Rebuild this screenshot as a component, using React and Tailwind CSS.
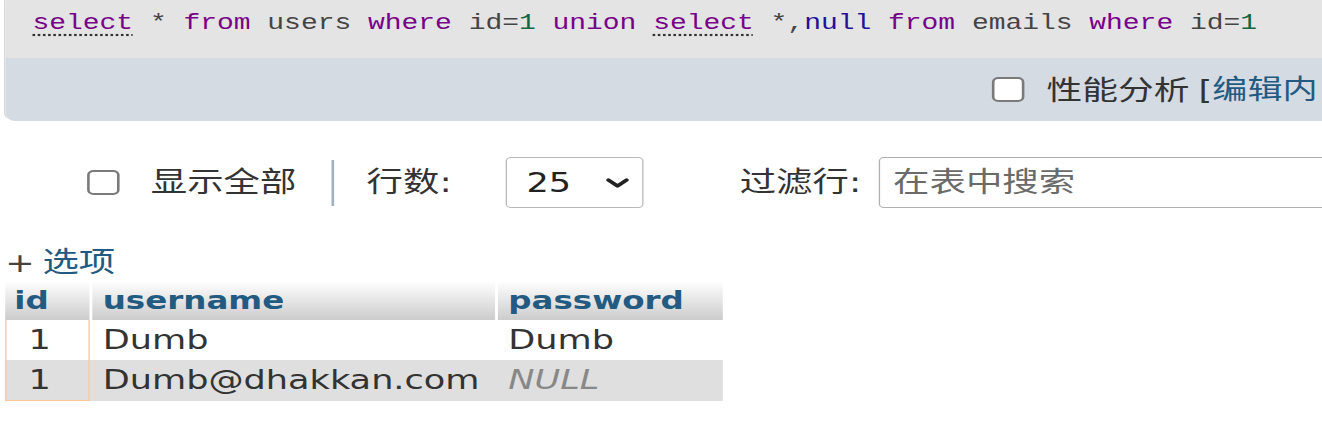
import React from "react";

const K = ({ children, u }) => (
  <span className={"text-[#770088]" + (u ? " underline decoration-dotted decoration-[#333] underline-offset-[5px]" : "")}>{children}</span>
);
const N = ({ children }) => <span className="text-[#116644]">{children}</span>;
const A = ({ children }) => <span className="text-[#221199]">{children}</span>;

const Box = () => (
  <span className="inline-block w-[25px] h-[25px] shrink-0 rounded-[5px] border-2 border-[#7a7a7a] bg-white" />
);

export default function App() {
  return (
    <div className="w-[1322px] h-[438px] overflow-hidden bg-white">
      <div
        className="w-[1100px] origin-top-left scale-x-[1.3] text-[#333]"
        style={{ fontFamily: '"DejaVu Sans", "Noto Sans CJK SC", sans-serif' }}
      >
        {/* SQL panel */}
        <div className="ml-[3px] rounded-bl-[9px] overflow-hidden border-l border-[#d8d8d8]">
          <div className="h-[58px] bg-[#e4e4e4] pl-[21px] pt-[11px]">
            <div
              className="text-[21.5px] leading-[24px] whitespace-pre text-[#444]"
              style={{ fontFamily: '"Liberation Mono", monospace' }}
            >
              <K u>select</K> * <K>from</K> users <K>where</K> id=<N>1</N> <K>union</K> <K u>select</K> *,<A>null</A> <K>from</K> emails <K>where</K> id=<N>1</N>
            </div>
          </div>
          <div className="h-[63px] bg-[#d4dbe2] flex items-center pl-[759px] whitespace-nowrap">
            <Box />
            <span className="ml-[17px] text-[27.5px] leading-[30px] text-[#333]">性能分析</span>
            <span className="ml-[7px] text-[27px] leading-[30px] text-[#333]">[</span>
            <span className="text-[27px] leading-[30px] text-[#235a81]">编辑内</span>
          </div>
        </div>

        {/* Controls row */}
        <div className="mt-[36px] h-[51px] flex items-center whitespace-nowrap text-[28px] leading-[30px]">
          <span className="ml-[67px] shrink-0 flex"><Box /></span>
          <span className="ml-[24px] w-[114px] shrink-0 text-[#333]">显示全部</span>
          <span className="ml-[25px] w-[2px] h-[46px] shrink-0 bg-[#9fb0c2]" />
          <span className="ml-[25px] w-[84px] shrink-0 text-[#333]">行数:</span>
          <div className="ml-[23px] w-[106px] h-[51px] shrink-0 rounded-[4px] border-[1.5px] border-[#b8b8b8] bg-white flex items-center pl-[15px] pr-[9px] justify-between text-[27px]">
            <span className="text-[#222]">25</span>
            <svg width="20" height="12" viewBox="0 0 20 12">
              <polyline points="3,3 10,9 17,3" fill="none" stroke="#222" strokeWidth="3.4" strokeLinecap="round" strokeLinejoin="round" />
            </svg>
          </div>
          <span className="ml-[74px] w-[94px] shrink-0 text-[#333]">过滤行:</span>
          <div className="ml-[13px] w-[400px] h-[51px] shrink-0 rounded-[4px] border-[1.5px] border-[#b0b0b0] bg-white flex items-center pl-[10px]">
            <span className="text-[#6a6a6a]">在表中搜索</span>
          </div>
        </div>

        {/* Options */}
        <div className="mt-[40px] h-[30px] flex items-center pl-[4px] text-[27px] leading-[30px] whitespace-nowrap">
          <span className="text-[#444]">+</span>
          <span className="ml-[6px] text-[28px] text-[#235a81]">选项</span>
        </div>

        {/* Table */}
        <div className="mt-[3px] ml-[4px] w-[552px]">
          <div className="flex h-[39px] items-stretch">
            <div className="w-[65px] bg-gradient-to-b from-white to-[#cccccc] flex items-center pl-[7px] text-[25px] font-bold text-[#235a81]">id</div>
            <div className="w-[2px] bg-white" />
            <div className="w-[310px] bg-gradient-to-b from-white to-[#cccccc] flex items-center pl-[8px] text-[25px] font-bold text-[#235a81]">username</div>
            <div className="w-[2px] bg-white" />
            <div className="flex-1 bg-gradient-to-b from-white to-[#cccccc] flex items-center pl-[8px] text-[25px] font-bold text-[#235a81]">password</div>
          </div>
          <div className="flex h-[40px] items-stretch bg-white text-[27px] text-[#333]">
            <div className="w-[65px] border-x-[1.5px] border-[#fcc89a] flex items-center pl-[17px]">1</div>
            <div className="w-[312px] flex items-center pl-[10px]">Dumb</div>
            <div className="flex-1 flex items-center pl-[10px]">Dumb</div>
          </div>
          <div className="flex h-[41px] items-stretch bg-[#dfdfdf] text-[27px] text-[#333]">
            <div className="w-[65px] border-x-[1.5px] border-b-[1.5px] border-[#fcc89a] flex items-center pl-[17px]">1</div>
            <div className="w-[312px] flex items-center pl-[10px]">Dumb@dhakkan.com</div>
            <div className="flex-1 flex items-center pl-[10px] italic text-[#888]">NULL</div>
          </div>
        </div>
      </div>
    </div>
  );
}
